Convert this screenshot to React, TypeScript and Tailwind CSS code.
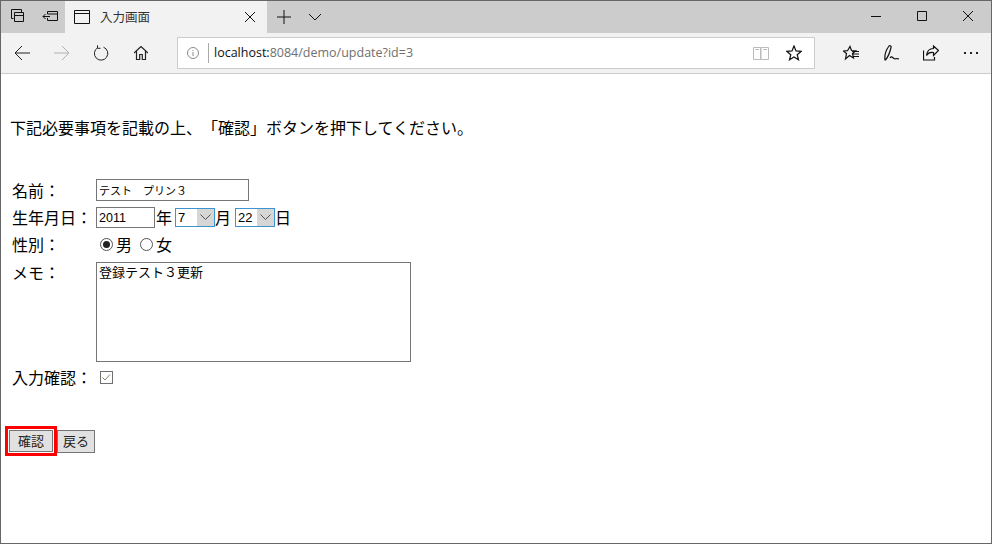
const jp = '"Noto Sans CJK JP", "Liberation Sans", sans-serif'

function Icon({ children, className = 'h-4 w-4', vb = '0 0 16 16', sw = '1' }: { children: React.ReactNode; className?: string; vb?: string; sw?: string }) {
  return (
    <svg viewBox={vb} className={className} fill="none" stroke="currentColor" strokeWidth={sw}>
      {children}
    </svg>
  )
}

function TitleBar() {
  return (
    <div className="flex h-[32px] bg-[#cccccc] text-[#111]">
      <div className="flex w-[64px] items-center justify-between pl-[8px] pr-[7px] pb-[2px]">
        <Icon>
          <path d="M2.500 1.500h10v3M2.500 1.500v9h2M5.500 4.500h9v9h-9zM5.500 7.500h9" />
        </Icon>
        <Icon>
          <path d="M5.500 3.500h10v9h-10v-2.500M5.500 3.500v2.500M5.500 6h10M1 8.500h7M3.500 6l-2.500 2.500 2.500 2.500" />
        </Icon>
      </div>
      <div className="flex w-[202px] items-center bg-[#f2f2f2] pl-[9px] pr-[12px]">
        <Icon className="h-[14px] w-[16px]" vb="0 0 16 14">
          <path d="M.5 .5h15v13h-15zM.5 3.500h15" />
        </Icon>
        <span className="ml-[10px] text-[12.500px] text-[#333]" style={{ fontFamily: jp }}>入力画面</span>
        <Icon className="ml-auto h-[10px] w-[10px]" vb="0 0 10 10">
          <path d="M0 0l10 10M10 0L0 10" />
        </Icon>
      </div>
      <div className="flex items-center pl-[10px]">
        <Icon className="h-[14px] w-[14px]" vb="0 0 14 14">
          <path d="M7 0v14M0 7h14" />
        </Icon>
        <Icon className="ml-[17px] h-[8px] w-[14px]" vb="0 0 14 8">
          <path d="M1 1l6 6 6-6" />
        </Icon>
      </div>
      <div className="ml-auto flex items-center pr-[18px] pb-[2px]">
        <Icon className="h-[10px] w-[10px]" vb="0 0 10 10">
          <path d="M0 5.500h10" />
        </Icon>
        <Icon className="ml-[36px] h-[10px] w-[10px]" vb="0 0 10 10">
          <path d="M.5 .5h9v9h-9z" />
        </Icon>
        <Icon className="ml-[36px] h-[10px] w-[10px]" vb="0 0 10 10">
          <path d="M0 0l10 10M10 0L0 10" />
        </Icon>
      </div>
    </div>
  )
}

function ToolBar() {
  return (
    <div className="flex h-[41px] items-center border-b border-[#cccccc] bg-[#f2f2f2] text-[#222]">
      <div className="flex w-[176px] items-center pl-[14px]">
        <Icon className="h-[14px] w-[15px]" vb="0 0 15 14">
          <path d="M0 7h15M7 0L0 7l7 7" />
        </Icon>
        <Icon className="ml-[24px] h-[14px] w-[15px] text-[#b0b0b0]" vb="0 0 15 14">
          <path d="M0 7h15M8 0l7 7-7 7" />
        </Icon>
        <Icon className="ml-[25px] h-[16px] w-[15px]" vb="0 0 15 16">
          <path d="M3.500 2.800A6.700 6.700 0 1 0 9.500 2.200M3.500 .3v3h3" />
        </Icon>
        <Icon className="ml-[25px] h-[14px] w-[14px]" sw="1.200" vb="0 0 14 14">
          <path d="M0 7l7-6.500L14 7M2.500 5v8.500h3.200V8.500h2.600v5h3.200V5" />
        </Icon>
      </div>
      <div className="flex h-[32px] w-[638px] items-center border border-[#cccccc] bg-white">
        <Icon className="ml-[9px] h-[12px] w-[12px] text-[#8a8a8a]" vb="0 0 12 12">
          <circle cx="6" cy="6" r="5.500" />
          <path d="M6 5v4M6 3v1" />
        </Icon>
        <div className="ml-[9px] h-[20px] w-px bg-[#aaaaaa]" />
        <span className="ml-[5px] text-[12.500px] text-[#707070]" style={{ fontFamily: '"Open Sans", sans-serif' }}>
          <span className="text-[#111]">localhost:</span>8084/demo/update?id=3
        </span>
        <Icon className="ml-auto h-[14px] w-[16px] text-[#bbbbbb]" vb="0 0 16 14">
          <path d="M.5 1.500h7v12h-7zM8 1.500h7.500v12H8zM2 3.500h4M10 3.500h4" />
        </Icon>
        <Icon className="ml-[17px] mr-[12px] h-[16px] w-[16px] text-[#111]" sw="1.200">
          <path d="M8 1l2 4.900 5.200.4-4 3.400 1.300 5.100L8 12l-4.500 2.800 1.300-5.100-4-3.400 5.200-.4z" />
        </Icon>
      </div>
      <div className="flex flex-1 items-center pl-[28px] text-[#111]">
        <Icon className="h-[16px] w-[16px]" sw="1.200">
          <path d="M7 1.500l1.500 4 4.200.3-3.200 2.700 1 4.500L6.500 10.500 2.500 14l1-5.500L.3 6l4.200-.3zM9 6.500h7M10 9h6M10 11.500h6" />
        </Icon>
        <Icon className="ml-[25px] h-[16px] w-[16px]" sw="1.200">
          <path d="M1 15C.5 11 2 5 5 1c1-.7 2.500 0 2 1.500C6 7 4 12 1.500 15zM6 13c1.500-2.500 2.500-.5 4 .5s2.500-.5 5 .5" />
        </Icon>
        <Icon className="ml-[23px] h-[16px] w-[16px]" sw="1.200">
          <path d="M.5 5.500v9.500h11v-3M15.500 5.500L10.500 1v2.500C6 3.500 4 6 3.500 10.500c1.500-2.500 4-3.500 7-3v3z" />
        </Icon>
        <div className="ml-[25px] flex gap-[4px]">
          <div className="h-[2px] w-[2px] bg-[#222]" />
          <div className="h-[2px] w-[2px] bg-[#222]" />
          <div className="h-[2px] w-[2px] bg-[#222]" />
        </div>
      </div>
    </div>
  )
}

function Select({ value, className }: { value: string; className: string }) {
  return (
    <div className={`flex h-[19px] w-[40px] items-stretch border border-[#3c94d0] bg-white ${className}`}>
      <span className="flex-1 pl-[2px] text-[13px] leading-[17px] text-black" style={{ fontFamily: '"Liberation Sans", sans-serif' }}>{value}</span>
      <div className="flex w-[17px] items-center justify-center bg-[#d6d6d6] text-[#555]">
        <Icon className="h-[6px] w-[11px]" vb="0 0 11 6">
          <path d="M.5 .5l5 5 5-5" />
        </Icon>
      </div>
    </div>
  )
}

function Label({ children }: { children: React.ReactNode }) {
  return <div className="w-[84px] shrink-0 pl-[2px] text-[16px] leading-[24px] whitespace-nowrap">{children}</div>
}

function Form() {
  return (
    <div className="pl-[9px] pt-[42px] text-black [text-spacing-trim:space-all]" style={{ fontFamily: jp }}>
      <p className="text-[16px] leading-[22px] whitespace-nowrap">下記必要事項を記載の上、「確認」ボタンを押下してください。</p>
      <div className="mt-[41px] flex flex-col">
        <div className="flex h-[22px] items-center">
          <Label>名前：</Label>
          <div className="ml-[2px] h-[22px] w-[153px] border border-[#767676] pl-[2px] text-[11px] leading-[20px]">テスト　プリン３</div>
        </div>
        <div className="mt-[5px] flex h-[22px] items-center">
          <Label>生年月日：</Label>
          <div className="ml-[2px] h-[21px] w-[59px] border border-[#767676] pl-[2px] text-[12.500px] leading-[21px]" style={{ fontFamily: '"Liberation Sans", sans-serif' }}>2011</div>
          <span className="ml-px text-[16px]">年</span>
          <Select value="7" className="ml-[3px]" />
          <span className="text-[16px]">月</span>
          <Select value="22" className="ml-[4px]" />
          <span className="text-[16px]">日</span>
        </div>
        <div className="mt-[5px] flex h-[22px] items-center">
          <Label>性別：</Label>
          <div className="ml-[6px] flex h-[13px] w-[13px] items-center justify-center rounded-full border border-[#555] bg-white">
            <div className="h-[7px] w-[7px] rounded-full bg-[#222]" />
          </div>
          <span className="ml-[3px] text-[16px]">男</span>
          <div className="ml-[8px] h-[13px] w-[13px] rounded-full border border-[#555] bg-white" />
          <span className="ml-[3px] text-[16px]">女</span>
        </div>
        <div className="mt-[7px] flex items-start">
          <div className="-mt-[2px]"><Label>メモ：</Label></div>
          <div className="ml-[2px] h-[100px] w-[315px] border border-[#767676] pl-[2px] text-[13px] leading-[18px]">登録テスト３更新</div>
        </div>
        <div className="mt-[3px] flex h-[24px] items-center">
          <Label>入力確認：</Label>
          <div className="ml-[6px] flex h-[13px] w-[13px] items-center justify-center border border-[#707070] bg-white text-[#8a8468]">
            <Icon className="h-[9px] w-[9px]" vb="0 0 9 9">
              <path d="M.5 4.500l2.500 2.500 5-5.500" />
            </Icon>
          </div>
        </div>
      </div>
      <div className="mt-[37px] -ml-[5px] flex items-center">
        <div className="border-[3px] border-[#ff0000] p-px">
          <div className="flex h-[22px] w-[44px] items-center justify-center border border-[#767676] bg-[#e1e1e1] text-[13px] text-[#222]">確認</div>
        </div>
        <div className="flex h-[23px] w-[38px] items-center justify-center border border-[#767676] bg-[#e1e1e1] text-[13px] text-[#222]">戻る</div>
      </div>
    </div>
  )
}

export default function App() {
  return (
    <div className="h-[544px] w-[992px] overflow-hidden border border-[#666666] bg-white">
      <TitleBar />
      <ToolBar />
      <Form />
    </div>
  )
}
